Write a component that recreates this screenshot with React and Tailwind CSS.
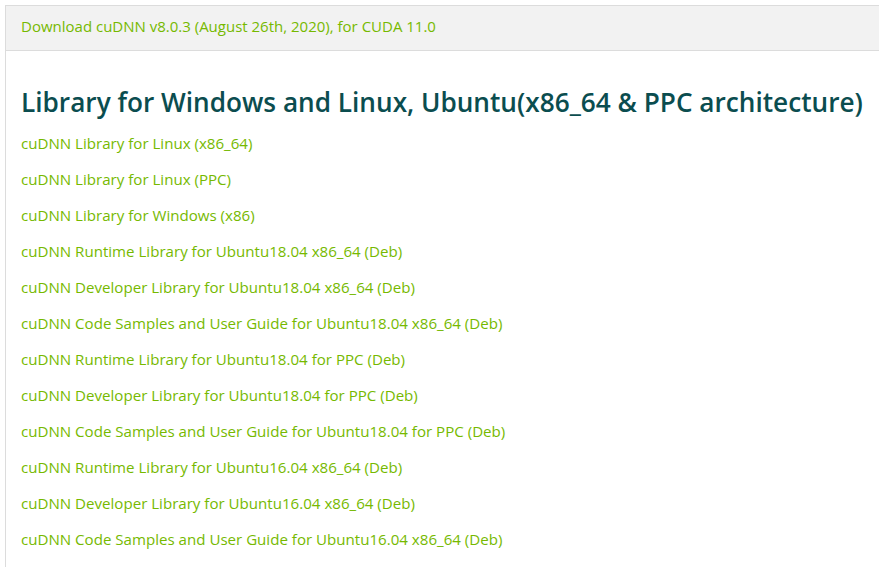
import React from 'react';

const links = [
  'cuDNN Library for Linux (x86_64)',
  'cuDNN Library for Linux (PPC)',
  'cuDNN Library for Windows (x86)',
  'cuDNN Runtime Library for Ubuntu18.04 x86_64 (Deb)',
  'cuDNN Developer Library for Ubuntu18.04 x86_64 (Deb)',
  'cuDNN Code Samples and User Guide for Ubuntu18.04 x86_64 (Deb)',
  'cuDNN Runtime Library for Ubuntu18.04 for PPC (Deb)',
  'cuDNN Developer Library for Ubuntu18.04 for PPC (Deb)',
  'cuDNN Code Samples and User Guide for Ubuntu18.04 for PPC (Deb)',
  'cuDNN Runtime Library for Ubuntu16.04 x86_64 (Deb)',
  'cuDNN Developer Library for Ubuntu16.04 x86_64 (Deb)',
  'cuDNN Code Samples and User Guide for Ubuntu16.04 x86_64 (Deb)',
];

export default function App() {
  return (
    <div className="min-h-[570px] bg-white pt-[5px] pl-[5px] font-['Open_Sans',sans-serif]">
      {/* Accordion header */}
      <div className="h-[46px] flex items-center pl-[15px] pb-[4px] bg-[#f2f2f2] border-t border-b border-l border-[#dcdcdc]">
        <a href="#" className="text-[15px] text-[#76b900]">
          Download cuDNN v8.0.3 (August 26th, 2020), for CUDA 11.0
        </a>
      </div>

      {/* Accordion body */}
      <div className="border-l border-[#dcdcdc] pl-[15px] pt-[33px] pb-[10px]">
        <h2 className="h-[36px] leading-[36px] text-[26.2px] font-semibold text-[#0b4d4f] whitespace-nowrap">
          Library for Windows and Linux, Ubuntu(x86_64 &amp; PPC architecture)
        </h2>
        <div className="mt-[5px]">
          {links.map((label) => (
            <div key={label} className="h-[36px] leading-[36px]">
              <a href="#" className="text-[15.1px] text-[#76b900]">{label}</a>
            </div>
          ))}
        </div>
      </div>
    </div>
  );
}
